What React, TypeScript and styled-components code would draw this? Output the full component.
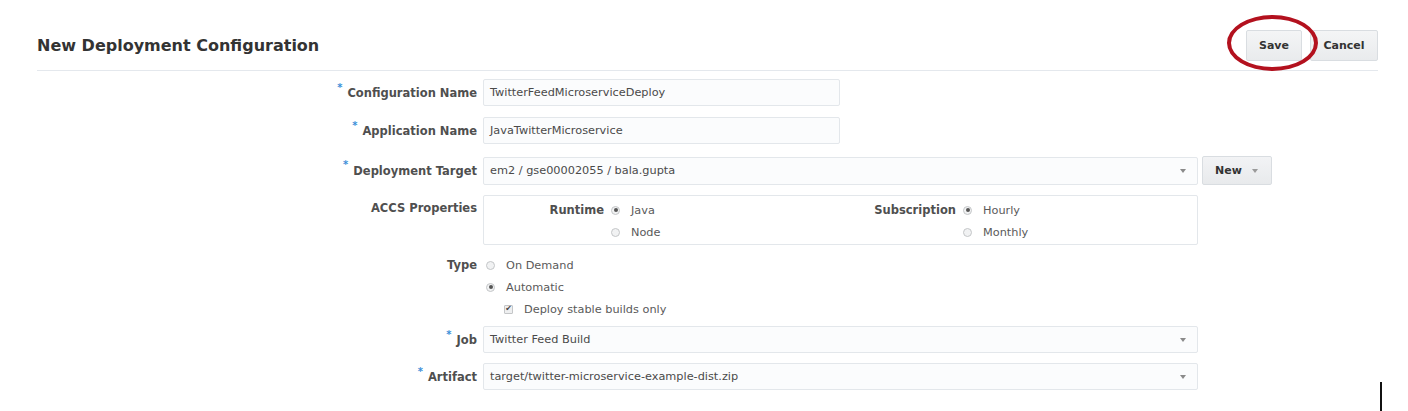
import React from 'react';
import styled, { createGlobalStyle } from 'styled-components';

const GlobalStyle = createGlobalStyle`
  html, body {
    margin: 0;
    padding: 0;
    background: #ffffff;
  }
  body {
    font-family: "DejaVu Sans", Verdana, sans-serif;
    color: #333;
  }
`;

const Page = styled.div`
  position: relative;
  width: 1408px;
  height: 411px;
  overflow: hidden;
  padding: 30px 30px 0 37px;
  box-sizing: border-box;
`;

const Header = styled.div`
  display: flex;
  align-items: center;
  justify-content: space-between;
  height: 31px;
  padding-bottom: 9px;
  border-bottom: 1px solid #e4e8ed;
`;

const Title = styled.h1`
  margin: 0;
  font-size: 16px;
  font-weight: bold;
  color: #333;
`;

const Actions = styled.div`
  display: flex;
  gap: 8px;
  position: relative;
`;

const Button = styled.button<{ $width: number }>`
  width: ${({ $width }) => $width}px;
  height: 31px;
  border: 1px solid #d9dde1;
  border-radius: 2px;
  background: linear-gradient(#f4f5f6, #e9ebed);
  font-family: "DejaVu Sans", Verdana, sans-serif;
  font-size: 11px;
  font-weight: bold;
  color: #333;
  padding: 0;
`;

const Highlight = styled.div`
  position: absolute;
  left: -19px;
  top: -15px;
  width: 83px;
  height: 48px;
  border: 4px solid #b3111e;
  border-radius: 50%;
  pointer-events: none;
`;

const Form = styled.div`
  display: grid;
  grid-template-columns: 440px 1fr;
  column-gap: 6px;
  margin-top: 8px;
`;

const Label = styled.div<{ $top?: number; $gap?: number }>`
  display: flex;
  align-items: ${({ $top }) => ($top !== undefined ? 'flex-start' : 'center')};
  justify-content: flex-end;
  padding-top: ${({ $top }) => $top ?? 0}px;
  margin-top: ${({ $gap }) => $gap ?? 0}px;
  font-size: 11.5px;
  font-weight: bold;
  color: #4f4f4f;
  white-space: nowrap;
`;

const Star = styled.span`
  color: #3d8fd9;
  font-size: 10px;
  align-self: flex-start;
  margin-top: 3px;
  margin-right: 5px;
`;

const Field = styled.div<{ $gap?: number }>`
  display: flex;
  align-items: center;
  gap: 4px;
  margin-top: ${({ $gap }) => $gap ?? 0}px;
`;

const TextBox = styled.div<{ $width: number; $height?: number }>`
  display: flex;
  align-items: center;
  justify-content: space-between;
  box-sizing: border-box;
  width: ${({ $width }) => $width}px;
  height: ${({ $height }) => $height ?? 27}px;
  padding: 0 11px 0 6px;
  border: 1px solid #e3e7eb;
  border-radius: 2px;
  background: #fbfcfd;
  font-size: 11.3px;
  color: #4a4a4a;
`;

const Caret = styled.span<{ $color?: string }>`
  width: 0;
  height: 0;
  border-left: 3.5px solid transparent;
  border-right: 3.5px solid transparent;
  border-top: 4px solid ${({ $color }) => $color ?? '#8a8a8a'};
`;

const NewButton = styled.button`
  display: flex;
  align-items: center;
  gap: 10px;
  box-sizing: border-box;
  width: 70px;
  height: 29px;
  padding: 0 0 0 12px;
  border: 1px solid #d9dde1;
  border-radius: 2px;
  background: linear-gradient(#f2f3f5, #e8eaec);
  font-family: "DejaVu Sans", Verdana, sans-serif;
  font-size: 11px;
  font-weight: bold;
  color: #333;
`;

const PropsBox = styled.div`
  display: grid;
  grid-template-columns: 120px 225px 113px 1fr;
  grid-auto-rows: 22px;
  column-gap: 7px;
  box-sizing: border-box;
  width: 715px;
  height: 50px;
  padding-top: 3px;
  border: 1px solid #e3e7eb;
  border-radius: 2px;
  background: #fff;
`;

const GroupLabel = styled.div`
  display: flex;
  align-items: center;
  justify-content: flex-end;
  font-size: 11.5px;
  font-weight: bold;
  color: #4f4f4f;
`;

const Option = styled.label<{ $indent?: number }>`
  display: flex;
  align-items: center;
  gap: 11px;
  height: 22px;
  padding-left: ${({ $indent }) => $indent ?? 0}px;
  font-size: 11.3px;
  color: #5a5a5a;
`;

const Radio = styled.span<{ $checked?: boolean }>`
  position: relative;
  box-sizing: border-box;
  width: 9px;
  height: 9px;
  border-radius: 50%;
  border: 1px solid #c4c6c8;
  background: #f1f2f3;
  &::after {
    content: '';
    display: ${({ $checked }) => ($checked ? 'block' : 'none')};
    position: absolute;
    left: 1.5px;
    top: 1.5px;
    width: 4px;
    height: 4px;
    border-radius: 50%;
    background: #555;
  }
`;

const Check = styled.span`
  display: flex;
  align-items: center;
  justify-content: center;
  box-sizing: border-box;
  width: 9px;
  height: 9px;
  border: 1px solid #c4c6c8;
  border-radius: 1px;
  background: #eeeff0;
  font-size: 8px;
  line-height: 1;
  color: #444;
`;

const Stack = styled.div<{ $gap?: number }>`
  display: flex;
  flex-direction: column;
  margin-top: ${({ $gap }) => $gap ?? 0}px;
  padding-left: 3px;
`;

const Cursor = styled.div`
  position: absolute;
  left: 1380px;
  top: 382px;
  width: 2px;
  height: 29px;
  background: #111;
`;

const Req = ({ children }: { children: React.ReactNode }) => (
  <>
    <Star>*</Star>
    {children}
  </>
);

export default function App() {
  return (
    <>
      <GlobalStyle />
      <Page>
        <Header>
          <Title>New Deployment Configuration</Title>
          <Actions>
            <Button $width={56}>Save</Button>
            <Button $width={68}>Cancel</Button>
            <Highlight />
          </Actions>
        </Header>

        <Form>
          <Label>
            <Req>Configuration Name</Req>
          </Label>
          <Field>
            <TextBox $width={357}>TwitterFeedMicroserviceDeploy</TextBox>
          </Field>

          <Label $gap={11}>
            <Req>Application Name</Req>
          </Label>
          <Field $gap={11}>
            <TextBox $width={357}>JavaTwitterMicroservice</TextBox>
          </Field>

          <Label $gap={12}>
            <Req>Deployment Target</Req>
          </Label>
          <Field $gap={12}>
            <TextBox $width={715} $height={28}>
              em2 / gse00002055 / bala.gupta
              <Caret />
            </TextBox>
            <NewButton>
              New
              <Caret $color="#9a9a9a" />
            </NewButton>
          </Field>

          <Label $top={6} $gap={10}>ACCS Properties</Label>
          <Field $gap={10}>
            <PropsBox>
              <GroupLabel>Runtime</GroupLabel>
              <Option>
                <Radio $checked />
                Java
              </Option>
              <GroupLabel>Subscription</GroupLabel>
              <Option>
                <Radio $checked />
                Hourly
              </Option>
              <span />
              <Option>
                <Radio />
                Node
              </Option>
              <span />
              <Option>
                <Radio />
                Monthly
              </Option>
            </PropsBox>
          </Field>

          <Label $top={10} $gap={3}>Type</Label>
          <Stack $gap={9}>
            <Option>
              <Radio />
              On Demand
            </Option>
            <Option>
              <Radio $checked />
              Automatic
            </Option>
            <Option $indent={18}>
              <Check>✔</Check>
              Deploy stable builds only
            </Option>
          </Stack>

          <Label $gap={6}>
            <Req>Job</Req>
          </Label>
          <Field $gap={6}>
            <TextBox $width={715}>
              Twitter Feed Build
              <Caret />
            </TextBox>
          </Field>

          <Label $gap={10}>
            <Req>Artifact</Req>
          </Label>
          <Field $gap={10}>
            <TextBox $width={715}>
              target/twitter-microservice-example-dist.zip
              <Caret />
            </TextBox>
          </Field>
        </Form>
        <Cursor />
      </Page>
    </>
  );
}
